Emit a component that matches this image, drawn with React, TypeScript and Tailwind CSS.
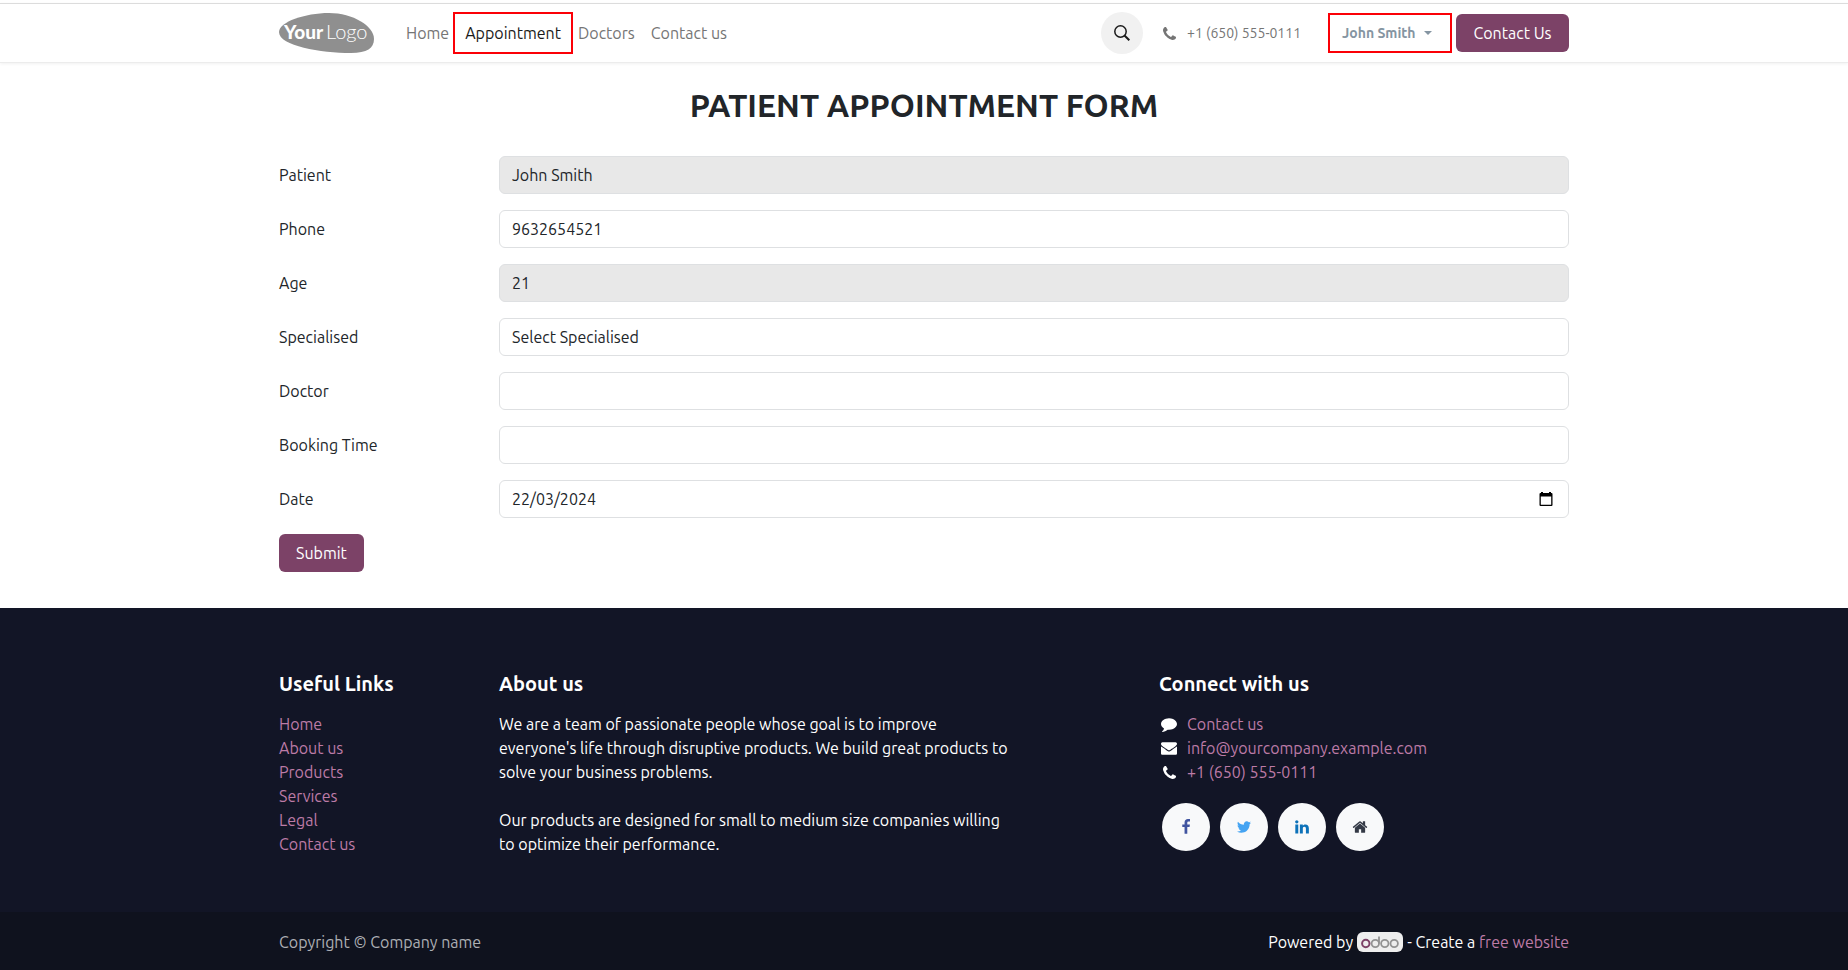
import type { ReactNode } from "react";

const ICONS = {
  phone:
    "M1408 1112q0 27-10 70.5t-21 68.5q-21 50-122 106-94 51-186 51-27 0-53-3.5t-57.5-12.5-47-14.5-55.5-20.5-49-18q-98-35-175-83-127-79-264-216t-216-264q-48-77-83-175-3-9-18-49t-20.5-55.5-14.5-47-12.5-57.5-3.5-53q0-92 51-186 56-101 106-122 25-11 68.5-21t70.5-10q14 0 21 3 18 6 53 76 11 19 30 54t35 63.5 31 53.5q3 4 17.5 25t21.5 35.5 7 28.5q0 20-28.5 50t-62 55-62 53-28.5 46q0 9 5 22.5t8.5 20.5 14 24 11.5 19q76 137 174 235t235 174q2 1 19 11.5t24 14 20.5 8.5 22.5 5q18 0 46-28.5t53-62 55-62 50-28.5q14 0 28.5 7t35.5 21.5 25 17.5q25 15 53.5 31t63.5 35 54 30q70 35 76 53 3 7 3 21z",
  comment:
    "M1792 896q0 174-120 321.5t-326 233-450 85.5q-70 0-145-8-198 175-460 242-49 14-114 22-17 2-30.5-9t-17.5-29v-1q-3-4-.5-12t2-10 4.5-9.5l6-9 7-8.5 8-9q7-8 31-34.5t34.5-38 31-39.5 32.5-51 27-59 26-76q-157-89-247.5-220t-90.5-281q0-130 71-248.5t191-204.5 286-136.5 348-50.5q244 0 450 85.5t326 233 120 321.5z",
  envelope:
    "M1792 710v794q0 66-47 113t-113 47h-1472q-66 0-113-47t-47-113v-794q44 49 101 87 362 246 497 345 57 42 92.5 65.5t94.5 48 110 24.5h2q51 0 110-24.5t94.5-48 92.5-65.5q170-123 498-345 57-39 100-87zm0-294q0 79-49 151t-122 123q-376 261-468 325-10 7-42.5 31t-54 38.8-52 33.2-57.5 27-50 9h-2q-23 0-50-9t-57.5-27-52-33.2-54-38.8-42.5-31q-91-64-262-182.5t-205-142.5q-62-42-117-115.5t-55-136.5q0-78 41.5-130t118.5-52h1472q65 0 112.5 47t47.5 113z",
  facebook:
    "M1343 12v264h-157q-86 0-116 36t-30 108v189h293l-39 296h-254v759h-306v-759h-255v-296h255v-218q0-186 104-288.5t277-102.5q147 0 228 12z",
  twitter:
    "M1684 408q-67 98-162 167 1 14 1 42 0 130-38 259.5t-115.5 248.5-184.5 210.5-258 146-323 54.5q-271 0-496-145 35 4 78 4 225 0 401-138-105-2-188-64.5t-114-159.5q33 5 61 5 43 0 85-11-112-23-185.5-111.5t-73.5-205.5v-4q68 38 146 41-66-44-105-115t-39-154q0-88 44-163 121 149 294.5 238.5t371.5 99.5q-8-38-8-74 0-134 94.5-228.5t228.5-94.5q140 0 236 102 109-21 205-78-37 115-142 178 93-10 186-50z",
  linkedin:
    "M477 625v991h-330v-991h330zm21-306q1 73-50.5 122t-135.5 49h-2q-82 0-132-49t-50-122q0-74 51.5-122.5t134.5-48.5 133 48.5 51 122.5zm1166 729v568h-329v-530q0-105-40.5-164.5t-126.5-59.5q-63 0-105.5 34.5t-63.5 85.5q-11 30-11 81v553h-329q2-399 2-647t-1-296l-1-48h329v144h-2q20-32 41-56t56.5-52 87-43.5 114.5-15.5q171 0 275 113.5t104 332.5z",
  home: "M1472 992v480q0 26-19 45t-45 19h-384v-384h-256v384h-384q-26 0-45-19t-19-45v-480q0-1 .5-3t.5-3l575-474 575 474q1 2 1 6zm223-69l-62 74q-8 9-21 11h-3q-13 0-21-7l-692-577-692 577q-12 8-24 7-13-2-21-11l-62-74q-8-10-7-23.5t11-21.5l719-599q32-26 76-26t76 26l244 204v-195q0-14 9-23t23-9h192q14 0 23 9t9 23v408l219 182q10 8 11 21.5t-7 23.5z",
};

type IconName = keyof typeof ICONS;

function Icon({ name, className }: { name: IconName; className: string }) {
  return (
    <svg
      viewBox={name === "phone" ? "0 0 1408 1408" : "0 0 1792 1792"}
      className={className}
      fill="currentColor"
      aria-hidden="true"
    >
      <path d={ICONS[name]} />
    </svg>
  );
}

function Container({ children, className = "" }: { children: ReactNode; className?: string }) {
  return <div className={`mx-auto w-full max-w-[1320px] px-[15px] ${className}`}>{children}</div>;
}

function Logo() {
  return (
    <svg viewBox="0 0 95 40" className="h-10 w-[95px]" role="img" aria-label="Your Logo">
      <path d="M0 19C0 9 26 0 50 0C74 0 95 13 95 26C95 35 88 40 72 40C42 40 0 33 0 19Z" fill="#8f8f8f" />
      <g fill="#fff" className="font-[Lato]">
        <text x="5" y="26" fontSize="19" fontWeight="900">
          Your
        </text>
        <text x="47" y="26" fontSize="20" fontWeight="300">
          Logo
        </text>
      </g>
    </svg>
  );
}

function Header() {
  return (
    <header className="mt-[3px] border-t border-b border-t-[#dcdcdc] border-b-[#ececec] shadow-[0_1px_3px_rgba(0,0,0,0.06)]">
      <Container className="flex h-[58px] items-center justify-between">
        <div className="flex items-center">
          <a href="#" className="mr-6">
            <Logo />
          </a>
          <nav className="flex items-center text-[#757575]">
            <a href="#" className="px-2">
              Home
            </a>
            <a
              href="#"
              aria-current="page"
              className="-ml-1 flex h-[42px] items-center border-2 border-[#fb0007] px-[10px] text-[#1a1a1a]"
            >
              Appointment
            </a>
            <a href="#" className="-ml-[3px] px-2">
              Doctors
            </a>
            <a href="#" className="px-2">
              Contact us
            </a>
          </nav>
        </div>
        <div className="flex items-center">
          <button
            type="button"
            aria-label="Search"
            className="mr-5 flex size-[42px] items-center justify-center rounded-full bg-[#f1f1f1] text-[#1a1a1a]"
          >
            <svg viewBox="0 0 16 16" className="size-4" fill="none" stroke="currentColor" aria-hidden="true">
              <circle cx="6.5" cy="6.5" r="5.7" strokeWidth="1.5" />
              <path d="M10.5 10.5L15.3 15.3" strokeWidth="2" />
            </svg>
          </button>
          <a href="#" className="flex w-[165px] items-center gap-[11px] text-sm text-[#757575]">
            <Icon name="phone" className="size-[13px]" />
            <span>+1 (650) 555-0111</span>
          </a>
          <button
            type="button"
            className="mr-1 flex h-10 w-[124px] items-center gap-2 border-2 border-[#fb0007] pl-3 text-sm font-bold text-[#8595a2]"
          >
            John Smith
            <svg viewBox="0 0 8 4" className="h-1 w-2" fill="currentColor" aria-hidden="true">
              <path d="M0 0H8L4 4Z" />
            </svg>
          </button>
          <a
            href="#"
            className="flex h-[38px] w-[113px] items-center justify-center rounded-md bg-[#7c4267] text-white"
          >
            Contact Us
          </a>
        </div>
      </Container>
    </header>
  );
}

const FIELD = "h-[38px] w-full appearance-none rounded-md border border-[#dee0e2] px-3 text-[#212529]";

function Row({ id, label, children }: { id: string; label: string; children: ReactNode }) {
  return (
    <div className="flex items-center">
      <label htmlFor={id} className="w-[220px] shrink-0">
        {label}
      </label>
      <div className="relative grow">{children}</div>
    </div>
  );
}

function AppointmentForm() {
  return (
    <main>
      <Container className="pt-6 pb-9">
        <h1 className="text-center text-[32px] leading-9 font-semibold">PATIENT APPOINTMENT FORM</h1>
        <form className="mt-[33px] flex flex-col gap-4">
          <Row id="patient" label="Patient">
            <input id="patient" className={`${FIELD} bg-[#e8e8e8]`} defaultValue="John Smith" readOnly />
          </Row>
          <Row id="phone" label="Phone">
            <input id="phone" type="tel" className={`${FIELD} bg-white`} defaultValue="9632654521" />
          </Row>
          <Row id="age" label="Age">
            <input id="age" className={`${FIELD} bg-[#e8e8e8]`} defaultValue="21" readOnly />
          </Row>
          <Row id="specialised" label="Specialised">
            <select id="specialised" className={`${FIELD} bg-white`}>
              <option>Select Specialised</option>
            </select>
          </Row>
          <Row id="doctor" label="Doctor">
            <select id="doctor" className={`${FIELD} bg-white`} />
          </Row>
          <Row id="booking" label="Booking Time">
            <select id="booking" className={`${FIELD} bg-white`} />
          </Row>
          <Row id="date" label="Date">
            <input id="date" className={`${FIELD} bg-white`} defaultValue="22/03/2024" />
            <button
              type="button"
              aria-label="Choose date"
              className="absolute inset-y-0 right-4 flex items-center text-black"
            >
              <svg viewBox="0 0 14 15" className="h-[15px] w-[14px]" fill="currentColor" aria-hidden="true">
                <path
                  fillRule="evenodd"
                  d="M2 0H4V1H10V0H12V1H12.5Q13.5 1 13.5 2V13Q13.5 14 12.5 14H1.5Q.5 14 .5 13V2Q.5 1 1.5 1H2ZM1.8 4.6V12.8H12.2V4.6Z"
                />
              </svg>
            </button>
          </Row>
          <button type="submit" className="h-[38px] self-start rounded-md bg-[#7c4267] px-[17px] text-white">
            Submit
          </button>
        </form>
      </Container>
    </main>
  );
}

const LINKS = ["Home", "About us", "Products", "Services", "Legal", "Contact us"];

const CONTACTS: { icon: IconName; size: string; text: string }[] = [
  { icon: "comment", size: "size-4", text: "Contact us" },
  { icon: "envelope", size: "size-4", text: "info@yourcompany.example.com" },
  { icon: "phone", size: "size-[13px]", text: "+1 (650) 555-0111" },
];

const SOCIALS: { icon: IconName; label: string; color: string }[] = [
  { icon: "facebook", label: "Facebook", color: "text-[#4054a0]" },
  { icon: "twitter", label: "Twitter", color: "text-[#45a4f2]" },
  { icon: "linkedin", label: "LinkedIn", color: "text-[#0d72b9]" },
  { icon: "home", label: "Home", color: "text-[#343a46]" },
];

const HEADING = "text-xl leading-6 font-semibold";

function OdooMark() {
  return (
    <svg viewBox="0 0 38 13" className="h-[13px] w-[38px]" fill="none" strokeWidth="1.8" role="img" aria-label="Odoo">
      <circle cx="4.8" cy="7.5" r="3.7" stroke="#7c4267" strokeWidth="2" />
      <g stroke="#929292">
        <circle cx="14.3" cy="7.5" r="3.7" />
        <path d="M18 .5V7.5" />
        <circle cx="23.8" cy="7.5" r="3.7" />
        <circle cx="33.2" cy="7.5" r="3.7" />
      </g>
    </svg>
  );
}

function Footer() {
  return (
    <footer className="flex grow flex-col bg-[#121526] text-white">
      <Container className="flex pt-16 pb-14">
        <section className="w-[220px] shrink-0">
          <h2 className={HEADING}>Useful Links</h2>
          <ul className="mt-4 text-[#bd7ba6]">
            {LINKS.map((link) => (
              <li key={link}>
                <a href="#">{link}</a>
              </li>
            ))}
          </ul>
        </section>
        <section className="w-[660px] pr-36">
          <h2 className={HEADING}>About us</h2>
          <p className="mt-4">
            We are a team of passionate people whose goal is to improve everyone's life through disruptive
            products. We build great products to solve your business problems.
          </p>
          <p className="mt-6">
            Our products are designed for small to medium size companies willing to optimize their performance.
          </p>
        </section>
        <section>
          <h2 className={HEADING}>Connect with us</h2>
          <ul className="mt-4">
            {CONTACTS.map((contact) => (
              <li key={contact.text} className="flex items-center gap-2">
                <span className="flex w-5 justify-center">
                  <Icon name={contact.icon} className={contact.size} />
                </span>
                <a href="#" className="text-[#bd7ba6]">
                  {contact.text}
                </a>
              </li>
            ))}
          </ul>
          <div className="mt-[19px] ml-[3px] flex gap-[10px]">
            {SOCIALS.map((social) => (
              <a
                key={social.label}
                href="#"
                aria-label={social.label}
                className={`flex size-12 items-center justify-center rounded-full bg-[#f8f9fa] ${social.color}`}
              >
                <Icon name={social.icon} className="size-4" />
              </a>
            ))}
          </div>
        </section>
      </Container>
      <div className="grow bg-[#0f121e]">
        <Container className="flex items-center justify-between py-[18px]">
          <span className="text-[#adafb4]">Copyright © Company name</span>
          <div className="flex items-center gap-1">
            <span>Powered by</span>
            <a href="#" className="flex h-5 w-[46px] items-center justify-center rounded-md bg-[#eeeeee]">
              <OdooMark />
            </a>
            <span>
              - Create a{" "}
              <a href="#" className="text-[#bd7ba6]">
                free website
              </a>
            </span>
          </div>
        </Container>
      </div>
    </footer>
  );
}

export default function App() {
  return (
    <div className="flex min-h-screen flex-col bg-white font-['Ubuntu','Noto_Sans',sans-serif] text-base leading-6 text-[#212529]">
      <Header />
      <AppointmentForm />
      <Footer />
    </div>
  );
}
